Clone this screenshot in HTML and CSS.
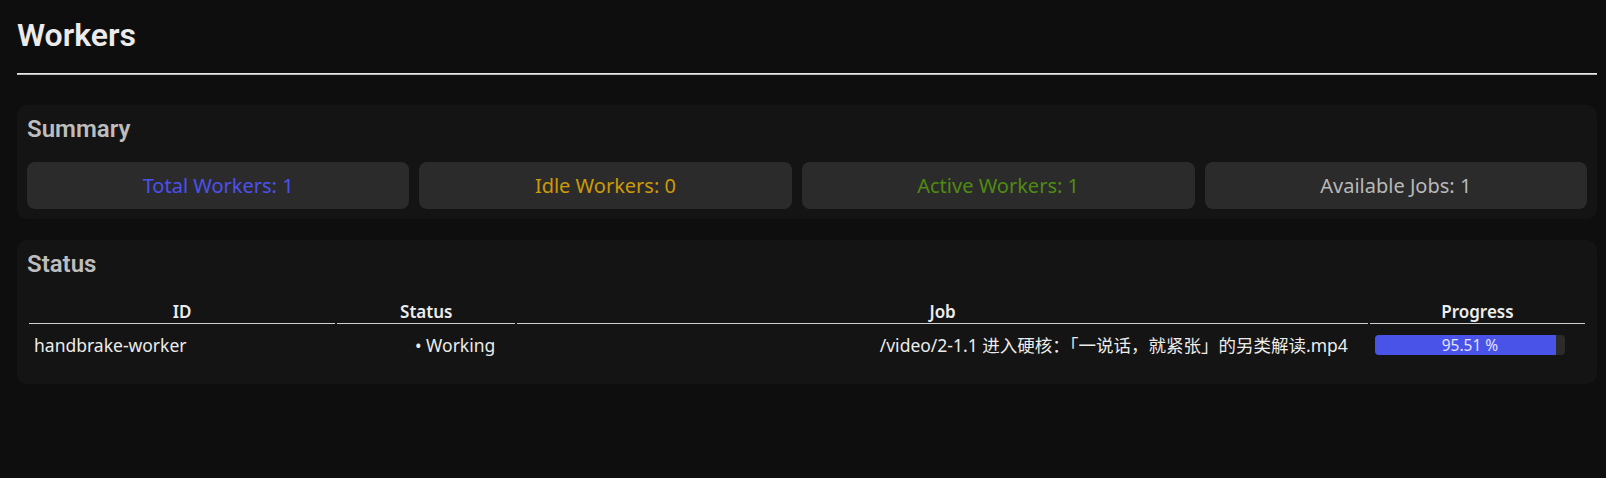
FILE: index.html
```html
<!DOCTYPE html>
<html lang="en">
<head>
<meta charset="utf-8">
<title>Workers</title>
<link rel="stylesheet" href="styles.css">
</head>
<body>
<div class="page">
  <h1 class="title">Workers</h1>
  <hr class="rule">
  <section class="card">
    <h2 class="card-title">Summary</h2>
    <div class="stats">
      <div class="stat stat-total">Total Workers: 1</div>
      <div class="stat stat-idle">Idle Workers: 0</div>
      <div class="stat stat-active">Active Workers: 1</div>
      <div class="stat stat-jobs">Available Jobs: 1</div>
    </div>
  </section>
  <section class="card card-status">
    <h2 class="card-title">Status</h2>
    <table class="table">
      <colgroup>
        <col class="col-id">
        <col class="col-status">
        <col class="col-job">
        <col class="col-progress">
      </colgroup>
      <thead>
        <tr>
          <th>ID</th>
          <th>Status</th>
          <th>Job</th>
          <th>Progress</th>
        </tr>
      </thead>
      <tbody>
        <tr>
          <td class="cell-id">handbrake-worker</td>
          <td class="cell-right">• Working</td>
          <td class="cell-right">/video/2-1.1 进入硬核：「一说话，就紧张」的另类解读.mp4</td>
          <td class="cell-progress">
            <div class="bar">
              <div class="bar-fill" style="width: 95.51%"></div>
              <span class="bar-text">95.51 %</span>
            </div>
          </td>
        </tr>
      </tbody>
    </table>
  </section>
</div>
</body>
</html>
```

FILE: styles.css
```css
html, body {
  margin: 0;
  padding: 0;
  background: #0e0e0e;
  color: #eaeaea;
  font-family: "Noto Sans", "Noto Sans CJK SC", sans-serif;
}

.page {
  padding: 17px 9px 0 17px;
}

.title {
  margin: 0;
  font-family: Roboto, "Liberation Sans", sans-serif;
  font-size: 32px;
  line-height: 37px;
  font-weight: 600;
  color: #ebebeb;
}

.rule {
  margin: 19px 0 30px 0;
  border: 0;
  border-top: 1px solid #e6e6e6;
  border-bottom: 1px solid #b8b8b8;
  height: 0;
}

.card {
  background: #141414;
  border-radius: 10px;
  padding: 10px;
}

.card-status {
  margin-top: 21px;
  padding-bottom: 18px;
}

.card-title {
  margin: 0;
  font-family: Roboto, "Liberation Sans", sans-serif;
  font-size: 24px;
  line-height: 28px;
  font-weight: 600;
  color: #bdbdbd;
}

.stats {
  display: flex;
  gap: 10px;
  margin-top: 19px;
}

.stat {
  flex: 1 1 auto;
  height: 47px;
  display: flex;
  align-items: center;
  justify-content: center;
  background: #2b2b2b;
  border-radius: 8px;
  font-size: 20px;
}

.stat-total { color: #4c51ee; }
.stat-idle { color: #cc9a08; }
.stat-active { color: #4f8a12; }
.stat-jobs { color: #b9b9b9; }

.table {
  width: 100%;
  margin-top: 20px;
  table-layout: fixed;
  border-collapse: separate;
  border-spacing: 2px;
  font-size: 17.5px;
}

.col-id { width: 306px; }
.col-status { width: 178px; }
.col-job { width: 850px; }
.col-progress { width: 215px; }

.table th {
  padding: 0;
  font-size: 17px;
  line-height: 23px;
  font-weight: 600;
  text-align: center;
  color: #ececec;
  border-bottom: 1px solid #cfcfcf;
}

.table td {
  padding: 7px 20px 7px 5px;
  line-height: 24px;
  color: #ececec;
  white-space: nowrap;
}

.cell-id { text-align: left; }
.cell-right { text-align: right; }

.bar {
  position: relative;
  height: 20px;
  background: #2b2b2b;
  border-radius: 4px;
  overflow: hidden;
}

.bar-fill {
  height: 100%;
  background: #4a53e8;
}

.bar-text {
  position: absolute;
  inset: 0;
  display: flex;
  align-items: center;
  justify-content: center;
  font-size: 15.5px;
  color: #e2e3ff;
}
```
